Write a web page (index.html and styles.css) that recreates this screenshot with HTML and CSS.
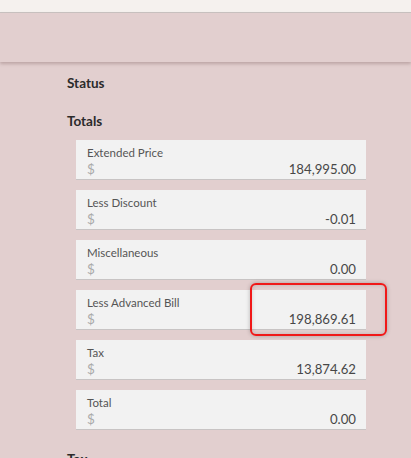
FILE: index.html
```html
<!DOCTYPE html>
<html>
<head>
<meta charset="utf-8">
<link rel="stylesheet" href="styles.css">
</head>
<body>
<div class="topbar"></div>
<div class="band"></div>
<main class="content">
  <h2 class="section">Status</h2>
  <h2 class="section">Totals</h2>
  <div class="cards">
    <div class="card"><div class="label">Extended Price</div><div class="row"><span class="cur">$</span><span class="val">184,995.00</span></div></div>
    <div class="card"><div class="label">Less Discount</div><div class="row"><span class="cur">$</span><span class="val">-0.01</span></div></div>
    <div class="card"><div class="label">Miscellaneous</div><div class="row"><span class="cur">$</span><span class="val">0.00</span></div></div>
    <div class="card"><div class="label">Less Advanced Bill</div><div class="row"><span class="cur">$</span><span class="val">198,869.61</span></div><div class="highlight"></div></div>
    <div class="card"><div class="label">Tax</div><div class="row"><span class="cur">$</span><span class="val">13,874.62</span></div></div>
    <div class="card"><div class="label">Total</div><div class="row"><span class="cur">$</span><span class="val">0.00</span></div></div>
  </div>
  <h2 class="section tax">Tax</h2>
</main>
</body>
</html>
```
FILE: styles.css
```css
html, body { margin: 0; padding: 0; }
body {
  background: #e2cfcf;
  font-family: "Source Sans Pro", Lato, "Open Sans", sans-serif;
  color: #333;
  height: 458px;
  overflow: hidden;
}
.topbar {
  height: 12px;
  background: #f5f1ee;
  border-bottom: 1px solid #c9c3c1;
}
.band {
  height: 49px;
  background: #e2cfcf;
  box-shadow: 0 2px 3px rgba(120, 90, 90, 0.35);
  position: relative;
}
.content {
  padding: 13px 0 0 67px;
}
.section {
  margin: 0;
  font-size: 13.5px;
  font-weight: bold;
  color: #2b2b2b;
  line-height: 16px;
}
.section + .section { margin-top: 22px; }
.cards {
  margin: 11px 0 0 9px;
  width: 290px;
  display: flex;
  flex-direction: column;
  gap: 10px;
}
.card {
  height: 40px;
  box-sizing: border-box;
  background: #f2f2f2;
  border-bottom: 1px solid #c8c4c4;
  padding: 5px 10px 0 11px;
  position: relative;
}
.label {
  font-size: 11.5px;
  color: #555;
  line-height: 16px;
}
.row {
  display: flex;
  justify-content: space-between;
  align-items: baseline;
  font-size: 13.2px;
  line-height: 17px;
}
.cur { color: #aaa; font-size: 13.5px; }
.val { color: #474747; }
.highlight {
  position: absolute;
  left: 174px;
  top: -7px;
  width: 133px;
  height: 49px;
  border: 2px solid #f01818;
  border-radius: 6px;
  box-shadow: 0 0 4px rgba(0,0,0,0.25), inset 0 0 4px rgba(0,0,0,0.15);
}
.tax { margin-top: 21px; }
```
